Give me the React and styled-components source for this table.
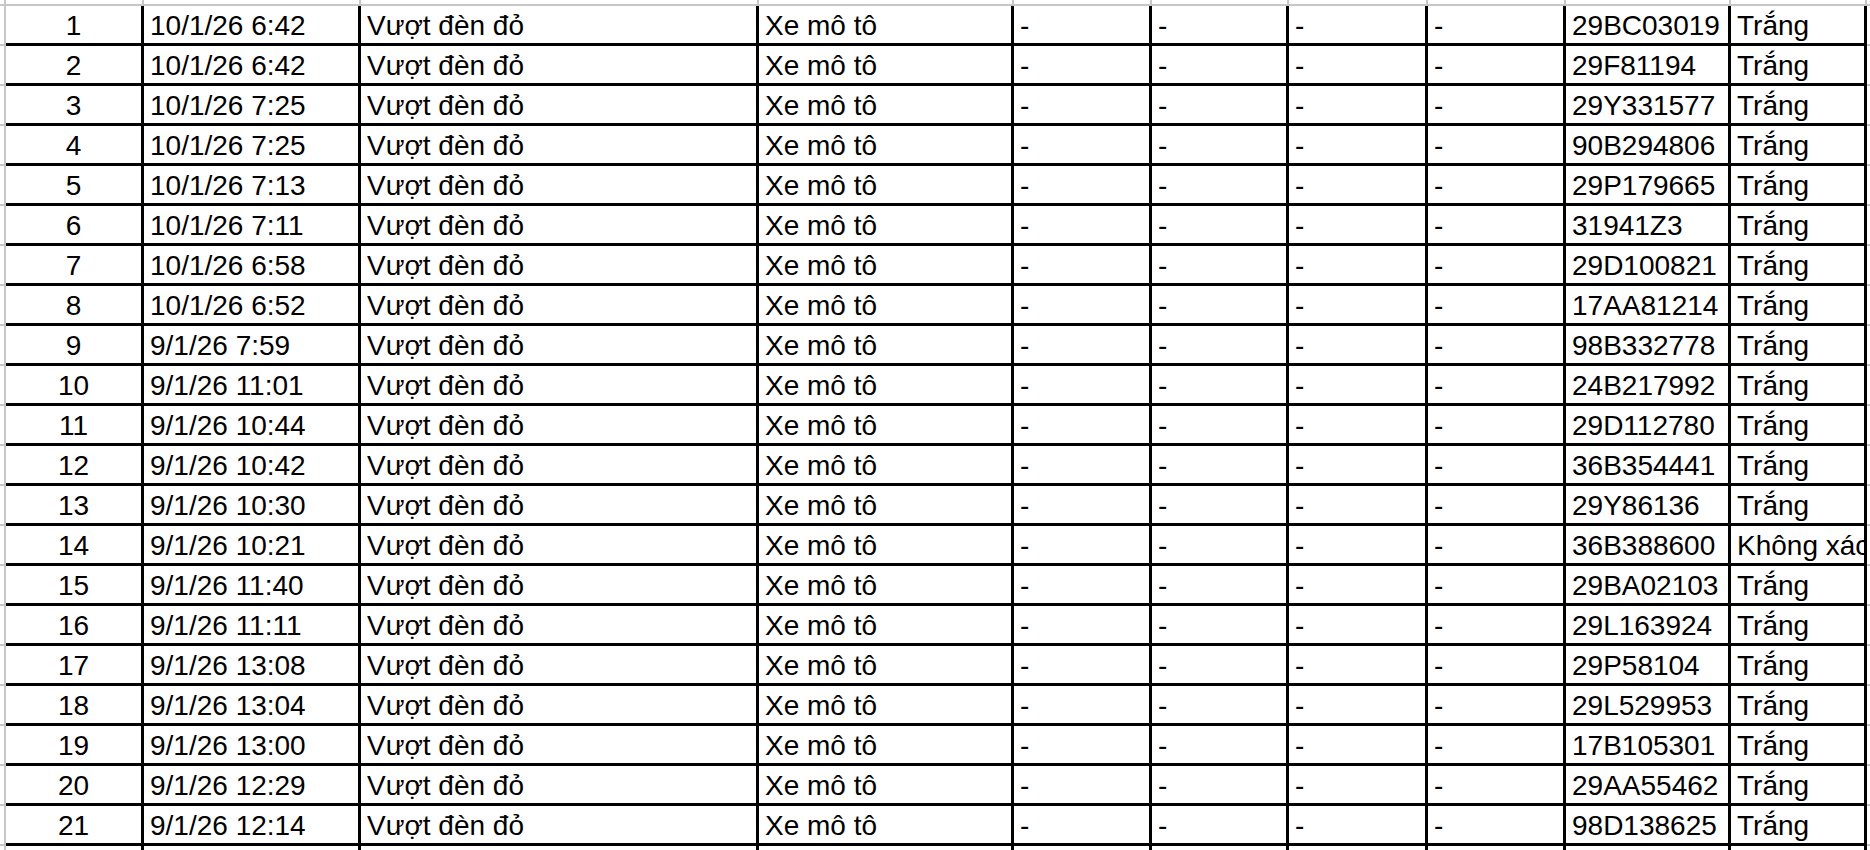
import React from 'react'
import styled, { createGlobalStyle } from 'styled-components'

const GlobalStyle = createGlobalStyle`
  html, body {
    margin: 0;
    padding: 0;
    background: #ffffff;
  }
  body {
    font-family: "Liberation Sans", Arial, sans-serif;
    overflow: hidden;
  }
`

// gutter + 10 columns + the sliver of the next column
const COLUMNS = '6px 138px 217px 398px 255px 138px 137px 139px 138px 165px 136px 3px'

const Sheet = styled.div`
  width: 1870px;
  height: 850px;
  overflow: hidden;
  display: flex;
  flex-direction: column;
`

const Row = styled.div`
  display: grid;
  grid-template-columns: ${COLUMNS};
  height: ${(p) => p.$height || 40}px;
  flex-shrink: 0;
`

const Cell = styled.div`
  box-sizing: border-box;
  display: flex;
  align-items: center;
  justify-content: ${(p) => (p.$center ? 'center' : 'flex-start')};
  padding: 2px 6px 0 6px;
  border-right: ${(p) => (p.$grid ? '2px solid #c7c7c7' : '3px solid #000000')};
  border-bottom: ${(p) => (p.$gridBottom ? '2px solid #c7c7c7' : '3px solid #000000')};
  font-size: 28px;
  color: #000000;
  white-space: nowrap;
  overflow: hidden;
  min-width: 0;
`

const Gutter = styled.div`
  box-sizing: border-box;
  border-right: 2px solid #c7c7c7;
  border-bottom: 2px solid #c7c7c7;
`

const Sliver = styled.div`
  box-sizing: border-box;
  border-bottom: 2px solid #c7c7c7;
`

const rows = [
  ['10/1/26 6:42', '29BC03019', 'Trắng'],
  ['10/1/26 6:42', '29F81194', 'Trắng'],
  ['10/1/26 7:25', '29Y331577', 'Trắng'],
  ['10/1/26 7:25', '90B294806', 'Trắng'],
  ['10/1/26 7:13', '29P179665', 'Trắng'],
  ['10/1/26 7:11', '31941Z3', 'Trắng'],
  ['10/1/26 6:58', '29D100821', 'Trắng'],
  ['10/1/26 6:52', '17AA81214', 'Trắng'],
  ['9/1/26 7:59', '98B332778', 'Trắng'],
  ['9/1/26 11:01', '24B217992', 'Trắng'],
  ['9/1/26 10:44', '29D112780', 'Trắng'],
  ['9/1/26 10:42', '36B354441', 'Trắng'],
  ['9/1/26 10:30', '29Y86136', 'Trắng'],
  ['9/1/26 10:21', '36B388600', 'Không xác định'],
  ['9/1/26 11:40', '29BA02103', 'Trắng'],
  ['9/1/26 11:11', '29L163924', 'Trắng'],
  ['9/1/26 13:08', '29P58104', 'Trắng'],
  ['9/1/26 13:04', '29L529953', 'Trắng'],
  ['9/1/26 13:00', '17B105301', 'Trắng'],
  ['9/1/26 12:29', '29AA55462', 'Trắng'],
  ['9/1/26 12:14', '98D138625', 'Trắng'],
]

const EmptyRow = ({ height, grid, gridBottom }) => (
  <Row $height={height}>
    <Gutter />
    {Array.from({ length: 10 }).map((_, i) => (
      <Cell key={i} $grid={grid} $gridBottom={gridBottom} />
    ))}
    <Sliver />
  </Row>
)

const DataRow = ({ index, time, plate, color }) => (
  <Row>
    <Gutter />
    <Cell $center>{index}</Cell>
    <Cell>{time}</Cell>
    <Cell>Vượt đèn đỏ</Cell>
    <Cell>Xe mô tô</Cell>
    <Cell>-</Cell>
    <Cell>-</Cell>
    <Cell>-</Cell>
    <Cell>-</Cell>
    <Cell>{plate}</Cell>
    <Cell>{color}</Cell>
    <Sliver />
  </Row>
)

export default function App() {
  return (
    <>
      <GlobalStyle />
      <Sheet>
        <EmptyRow height={6} grid gridBottom />
        {rows.map(([time, plate, color], i) => (
          <DataRow key={i} index={i + 1} time={time} plate={plate} color={color} />
        ))}
        <EmptyRow height={20} />
      </Sheet>
    </>
  )
}
